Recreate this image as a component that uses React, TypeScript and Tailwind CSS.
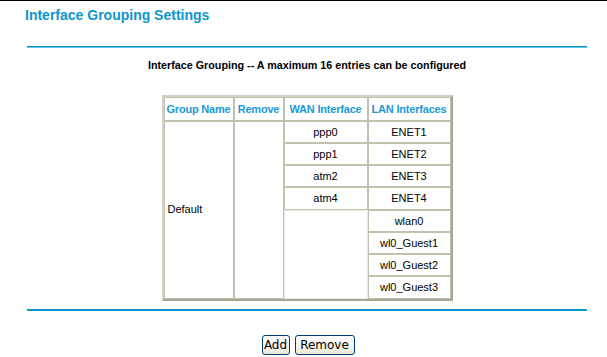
const wan = ["ppp0", "ppp1", "atm2", "atm4"]
const lan = ["ENET1", "ENET2", "ENET3", "ENET4", "wlan0", "wl0_Guest1", "wl0_Guest2", "wl0_Guest3"]

export default function App() {
    const cell = "border border-[#c4c0b0] h-[22.25px] p-0 text-center text-[11px] text-black"
    const head = "border border-[#c4c0b0] h-[23.5px] p-0 text-center text-[11px] tracking-[-0.2px] font-bold text-[#1a9ad6] whitespace-nowrap"

    return <div className="w-[607px] h-[357px] bg-white border-t border-black font-['Liberation_Sans',Arial,sans-serif]">
        <h1 className="ml-[25px] mt-[5px] text-[14px] leading-[18px] font-bold text-[#0f96c9]">
            Interface Grouping Settings
        </h1>

        <div className="ml-[27px] w-[560px]">
            <div className="mt-[22px] h-[2px] border-t border-[#0c8fc4] border-b border-b-[#62c6ea]" />

            <p className="mt-[9px] text-center text-[10.75px] font-bold text-black">
                Interface Grouping -- A maximum 16 entries can be configured
            </p>

            <table className="mx-auto mt-[22px] w-[291px] table-fixed border-separate border-spacing-0 border-2 border-[#d4d0c4] border-b-[#a8a494] border-r-[#a8a494]">
                <thead>
                    <tr>
                        <th className={`${head} w-[70px]`}>Group Name</th>
                        <th className={`${head} w-[50px]`}>Remove</th>
                        <th className={`${head} w-[84px]`}>WAN Interface</th>
                        <th className={`${head} w-[83px]`}>LAN Interfaces</th>
                    </tr>
                </thead>
                <tbody>
                    {lan.map((l, i) => (
                        <tr key={l}>
                            {i === 0 && (
                                <>
                                    <td rowSpan={8} className="border border-[#c4c0b0] pl-[3px] text-left text-[11px] text-black align-middle">
                                        Default
                                    </td>
                                    <td rowSpan={8} className="border border-[#c4c0b0]" />
                                </>
                            )}
                            {i < 4 && <td className={cell}>{wan[i]}</td>}
                            {i === 4 && <td rowSpan={4} className="border border-[#ece9e0]" />}
                            <td className={cell}>{l}</td>
                        </tr>
                    ))}
                </tbody>
            </table>

            <div className="mt-[8px] h-[2px] bg-[#0399cc]" />

            <div className="mt-[24px] flex justify-center gap-[5px] ml-[2px]">
                <button className="h-[20px] w-[28px] rounded-[3px] border border-[#003c74] bg-gradient-to-b from-white to-[#ece9d8] text-[12px] leading-none text-black font-['DejaVu_Sans',sans-serif]">
                    Add
                </button>
                <button className="h-[20px] w-[60px] rounded-[3px] border border-[#003c74] bg-gradient-to-b from-white to-[#ece9d8] text-[12px] leading-none text-black font-['DejaVu_Sans',sans-serif]">
                    Remove
                </button>
            </div>
        </div>
    </div>
}
